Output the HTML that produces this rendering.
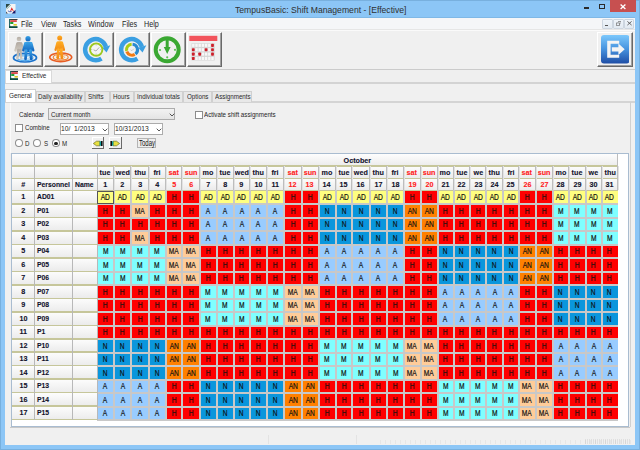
<!DOCTYPE html><html><head><meta charset="utf-8"><style>*{margin:0;padding:0}
html,body{width:640px;height:450px;overflow:hidden;background:#f0f0f0;font-family:"Liberation Sans", sans-serif}
div{position:absolute}
i{font-style:normal;display:inline-block;white-space:nowrap}
.tx{white-space:nowrap;transform-origin:0 50%}
svg{position:absolute}
.hd{background:linear-gradient(#fdfdfd,#ebebeb);text-align:center;font-weight:bold;font-size:8px;color:#10102a;-webkit-text-stroke:0.1px}
.hd i{transform:scaleX(.9)}
.hd.l{text-align:left}
.hd.l i{transform-origin:left center;transform:scaleX(.85);margin-left:2px}
.hd.rd{color:#ff2020}
.rw b{position:absolute;top:0;width:16.80px;height:100%;text-align:center;font-size:9px;font-weight:normal;color:#111;-webkit-text-stroke:0.2px #111}
.rw b i{transform:scaleX(.74)}
.rw b.AD{background:#FFFF80}.rw b.H{background:#FF0000}.rw b.MA{background:#FFCC99}.rw b.A{background:#99CCFF}.rw b.N{background:#0A96DC}.rw b.M{background:#80FFFF}.rw b.AN{background:#FF8000}
</style></head><body><div style="left:0.00px;top:0.00px;width:640.00px;height:450.00px;background:#8cc6f6;box-shadow:inset 0 0 0 1px #78b0de"></div><div style="left:5.00px;top:18.00px;width:630.00px;height:427.00px;background:#f0f0f0"></div><svg style="left:6px;top:4px" width="9.5" height="9.5" viewBox="0 0 10 10"><rect width="10" height="10" fill="#f4f4f4"/><path d="M0 0H4.5L0 4.5Z" fill="#2a4a48"/><path d="M0.5 5.5L5 1" stroke="#5a9a90" stroke-width="0.8"/><path d="M6 3.5L8.5 8H7.6L6.8 6.6H5.6L5 8H4.2Z" fill="#e02a2a"/><path d="M2 7.2Q4 8.8 6 8" stroke="#3850b0" stroke-width="0.9" fill="none"/><path d="M10 6V10H6Z" fill="#101c70"/><path d="M0 8V10H2Z" fill="#404850"/></svg><div class="tx" style="left:235.20px;top:4.64px;font-size:9.4px;line-height:9.4px;color:#303030;transform:scaleX(0.92);">TempusBasic: Shift Management - [Effective]</div><div style="left:583.80px;top:7.40px;width:4.80px;height:1.80px;background:#2a2a2a"></div><div style="left:598.80px;top:4.20px;width:6.40px;height:4.60px;border:1px solid #2a2a2a;border-top-width:1.6px;box-sizing:border-box"></div><div style="left:609.80px;top:0.40px;width:26.00px;height:11.80px;background:#c75050"></div><svg style="left:620px;top:4px" width="6" height="5.5" viewBox="0 0 6 5.5"><path d="M0.6 0.5L5.4 5M5.4 0.5L0.6 5" stroke="#fff" stroke-width="1.3"/></svg><div style="left:5.00px;top:17.00px;width:630.00px;height:1.00px;background:#7fb8e6"></div><div style="left:5.00px;top:18.00px;width:630.00px;height:10.50px;background:#f5f6f8"></div><div style="left:5.00px;top:28.50px;width:630.00px;height:1.50px;background:#e6e6e6"></div><div style="left:5.00px;top:30.00px;width:630.00px;height:1.00px;background:#fafafa"></div><svg style="left:9px;top:19px" width="8.5" height="9" viewBox="0 0 8.5 9"><rect width="8.5" height="9" fill="#f6f6f6"/><rect x="0" y="0" width="8.5" height="1" fill="#3a3a3a"/><rect x="0" y="0" width="1.3" height="9" fill="#2a6a68"/><rect x="1.3" y="1.3" width="6.5" height="1.5" fill="#d42020"/><rect x="1.3" y="3" width="3" height="2" fill="#20a030"/><rect x="4.3" y="5" width="3.5" height="1.6" fill="#d8c820"/><rect x="1.3" y="5" width="3" height="1.6" fill="#fff"/><rect x="0" y="7.2" width="8.5" height="1.8" fill="#0a4a40"/></svg><div class="tx" style="left:21.40px;top:19.68px;font-size:9px;line-height:9px;color:#1e1e1e;transform:scaleX(0.8);">File</div><div class="tx" style="left:40.60px;top:19.68px;font-size:9px;line-height:9px;color:#1e1e1e;transform:scaleX(0.8);">View</div><div class="tx" style="left:63.20px;top:19.68px;font-size:9px;line-height:9px;color:#1e1e1e;transform:scaleX(0.8);">Tasks</div><div class="tx" style="left:88.20px;top:19.68px;font-size:9px;line-height:9px;color:#1e1e1e;transform:scaleX(0.8);">Window</div><div class="tx" style="left:122.40px;top:19.68px;font-size:9px;line-height:9px;color:#1e1e1e;transform:scaleX(0.8);">Files</div><div class="tx" style="left:143.90px;top:19.68px;font-size:9px;line-height:9px;color:#1e1e1e;transform:scaleX(0.8);">Help</div><div style="left:602.30px;top:18.50px;width:10.40px;height:10.80px;background:linear-gradient(#eef4fa,#e2eaf2);border:1px solid #cdd6e0;border-radius:1px;box-sizing:border-box"></div><div style="left:613.20px;top:18.50px;width:10.40px;height:10.80px;background:linear-gradient(#eef4fa,#e2eaf2);border:1px solid #cdd6e0;border-radius:1px;box-sizing:border-box"></div><div style="left:624.10px;top:18.50px;width:10.40px;height:10.80px;background:linear-gradient(#eef4fa,#e2eaf2);border:1px solid #cdd6e0;border-radius:1px;box-sizing:border-box"></div><div style="left:604.80px;top:25.30px;width:3.60px;height:1.10px;background:#555"></div><svg style="left:615.8px;top:20.5px" width="5.5" height="5" viewBox="0 0 5.5 5"><path d="M2 0.4h3.1v2.7M0.4 1.9h3.1v2.7h-3.1z" fill="none" stroke="#666" stroke-width="0.7"/></svg><svg style="left:626.6px;top:21.3px" width="5" height="4.5" viewBox="0 0 5 4.5"><path d="M0.4 0.4L4.6 4.1M4.6 0.4L0.4 4.1" stroke="#555" stroke-width="0.9"/></svg><div style="left:5.00px;top:69.00px;width:630.00px;height:1.00px;background:#cbcbcb"></div><div style="left:7.70px;top:32.00px;width:34.90px;height:34.50px;background:#f0f0f0;border-left:1px solid #fff;border-top:1px solid #fff;border-right:1px solid #696969;border-bottom:1px solid #696969;box-sizing:border-box;box-shadow:inset -1px -1px 0 #a0a0a0"></div><div style="left:43.50px;top:32.00px;width:34.90px;height:34.50px;background:#f0f0f0;border-left:1px solid #fff;border-top:1px solid #fff;border-right:1px solid #696969;border-bottom:1px solid #696969;box-sizing:border-box;box-shadow:inset -1px -1px 0 #a0a0a0"></div><div style="left:79.30px;top:32.00px;width:34.90px;height:34.50px;background:#f0f0f0;border-left:1px solid #fff;border-top:1px solid #fff;border-right:1px solid #696969;border-bottom:1px solid #696969;box-sizing:border-box;box-shadow:inset -1px -1px 0 #a0a0a0"></div><div style="left:115.10px;top:32.00px;width:34.90px;height:34.50px;background:#f0f0f0;border-left:1px solid #fff;border-top:1px solid #fff;border-right:1px solid #696969;border-bottom:1px solid #696969;box-sizing:border-box;box-shadow:inset -1px -1px 0 #a0a0a0"></div><div style="left:150.90px;top:32.00px;width:34.90px;height:34.50px;background:#f0f0f0;border-left:1px solid #fff;border-top:1px solid #fff;border-right:1px solid #696969;border-bottom:1px solid #696969;box-sizing:border-box;box-shadow:inset -1px -1px 0 #a0a0a0"></div><div style="left:186.70px;top:32.00px;width:34.90px;height:34.50px;background:#f0f0f0;border-left:1px solid #fff;border-top:1px solid #fff;border-right:1px solid #696969;border-bottom:1px solid #696969;box-sizing:border-box;box-shadow:inset -1px -1px 0 #a0a0a0"></div><div style="left:597.40px;top:32.00px;width:35.20px;height:35.00px;background:#f0f0f0;border-left:1px solid #fff;border-top:1px solid #fff;border-right:1px solid #696969;border-bottom:1px solid #696969;box-sizing:border-box;box-shadow:inset -1px -1px 0 #a0a0a0"></div><div style="left:5.00px;top:70.00px;width:630.00px;height:14.00px;background:#efefef;border-bottom:2px solid #d3d3d3;box-sizing:border-box"></div><div style="left:5.00px;top:70.00px;width:46.50px;height:13.30px;background:#fff;border:1px solid #d9d9d9;border-bottom:none;box-sizing:border-box"></div><svg style="left:9.5px;top:71.2px" width="8.5" height="9" viewBox="0 0 8.5 9"><rect width="8.5" height="9" fill="#f6f6f6"/><rect x="0" y="0" width="8.5" height="1" fill="#3a3a3a"/><rect x="0" y="0" width="1.3" height="9" fill="#2a6a68"/><rect x="1.3" y="1.3" width="6.5" height="1.5" fill="#d42020"/><rect x="1.3" y="3" width="3" height="2" fill="#20a030"/><rect x="4.3" y="5" width="3.5" height="1.6" fill="#d8c820"/><rect x="1.3" y="5" width="3" height="1.6" fill="#fff"/><rect x="0" y="7.2" width="8.5" height="1.8" fill="#0a4a40"/></svg><div class="tx" style="left:22.30px;top:72.43px;font-size:8px;line-height:8px;color:#2a2a2a;transform:scaleX(0.8);">Effective</div><div style="left:5.00px;top:101.30px;width:630.00px;height:1.60px;background:#d4d4d4"></div><div style="left:629.50px;top:101.50px;width:1.00px;height:325.00px;background:#d0d0d0"></div><div style="left:35.60px;top:90.80px;width:49.10px;height:11.00px;background:#e8e8e8;border:1px solid #d0d0d0;border-bottom:none;box-sizing:border-box"></div><div class="tx" style="left:37.70px;top:93.37px;font-size:7.6px;line-height:7.6px;color:#2a2a2a;transform:scaleX(0.82);">Daily availability</div><div style="left:85.20px;top:90.80px;width:24.60px;height:11.00px;background:#e8e8e8;border:1px solid #d0d0d0;border-bottom:none;box-sizing:border-box"></div><div class="tx" style="left:88.30px;top:93.37px;font-size:7.6px;line-height:7.6px;color:#2a2a2a;transform:scaleX(0.82);">Shifts</div><div style="left:109.80px;top:90.80px;width:23.80px;height:11.00px;background:#e8e8e8;border:1px solid #d0d0d0;border-bottom:none;box-sizing:border-box"></div><div class="tx" style="left:112.70px;top:93.37px;font-size:7.6px;line-height:7.6px;color:#2a2a2a;transform:scaleX(0.82);">Hours</div><div style="left:133.60px;top:90.80px;width:49.20px;height:11.00px;background:#e8e8e8;border:1px solid #d0d0d0;border-bottom:none;box-sizing:border-box"></div><div class="tx" style="left:137.10px;top:93.37px;font-size:7.6px;line-height:7.6px;color:#2a2a2a;transform:scaleX(0.82);">Individual totals</div><div style="left:182.80px;top:90.80px;width:29.40px;height:11.00px;background:#e8e8e8;border:1px solid #d0d0d0;border-bottom:none;box-sizing:border-box"></div><div class="tx" style="left:187.10px;top:93.37px;font-size:7.6px;line-height:7.6px;color:#2a2a2a;transform:scaleX(0.82);">Options</div><div style="left:212.20px;top:90.80px;width:40.20px;height:11.00px;background:#e8e8e8;border:1px solid #d0d0d0;border-bottom:none;box-sizing:border-box"></div><div class="tx" style="left:215.20px;top:93.37px;font-size:7.6px;line-height:7.6px;color:#2a2a2a;transform:scaleX(0.82);">Assignments</div><div style="left:5.00px;top:89.40px;width:30.60px;height:13.10px;background:#fff;border:1px solid #d0d0d0;border-bottom:none;box-sizing:border-box"></div><div class="tx" style="left:8.60px;top:91.77px;font-size:7.6px;line-height:7.6px;color:#2a2a2a;transform:scaleX(0.84);">General</div><div style="left:10.00px;top:103.00px;width:1.00px;height:50.00px;background:#fafafa"></div><div class="tx" style="left:19.20px;top:110.63px;font-size:8px;line-height:8px;color:#1e1e1e;transform:scaleX(0.77);">Calendar</div><div style="left:48.40px;top:108.00px;width:126.60px;height:11.70px;background:linear-gradient(#f2f2f2,#e4e4e4);border:1px solid #acacac;box-sizing:border-box"></div><div class="tx" style="left:50.80px;top:110.63px;font-size:8px;line-height:8px;color:#1e1e1e;transform:scaleX(0.77);">Current month</div><svg style="position:absolute;left:168.5px;top:112.5px" width="6" height="4"><path d="M0.7 0.7L3 3L5.3 0.7" fill="none" stroke="#444" stroke-width="0.9"/></svg><div style="left:195.00px;top:111.20px;width:8.00px;height:7.60px;background:#fff;border:1px solid #8c8c8c;box-sizing:border-box"></div><div class="tx" style="left:204.20px;top:111.13px;font-size:8px;line-height:8px;color:#1e1e1e;transform:scaleX(0.775);">Activate shift assignments</div><div style="left:15.20px;top:124.20px;width:7.60px;height:7.80px;background:#fff;border:1px solid #8c8c8c;box-sizing:border-box"></div><div class="tx" style="left:24.60px;top:124.23px;font-size:8px;line-height:8px;color:#1e1e1e;transform:scaleX(0.77);">Combine</div><div style="left:59.80px;top:123.40px;width:49.50px;height:11.80px;background:#fff;border:1px solid #acacac;box-sizing:border-box"></div><div class="tx" style="left:61.00px;top:125.23px;font-size:8px;line-height:8px;color:#1e1e1e;transform:scaleX(0.84);">10/&nbsp; 1/2013</div><svg style="position:absolute;left:102.3px;top:128px" width="6" height="4"><path d="M0.7 0.7L3 3L5.3 0.7" fill="none" stroke="#444" stroke-width="0.9"/></svg><div style="left:114.00px;top:123.40px;width:49.20px;height:11.80px;background:#fff;border:1px solid #acacac;box-sizing:border-box"></div><div class="tx" style="left:115.20px;top:125.23px;font-size:8px;line-height:8px;color:#1e1e1e;transform:scaleX(0.84);">10/31/2013</div><svg style="position:absolute;left:156.2px;top:128px" width="6" height="4"><path d="M0.7 0.7L3 3L5.3 0.7" fill="none" stroke="#444" stroke-width="0.9"/></svg><div style="left:15.00px;top:139.20px;width:7.80px;height:8.20px;background:#fff;border:1px solid #8c8c8c;border-radius:50%;box-sizing:border-box"></div><div class="tx" style="left:25.00px;top:139.63px;font-size:8px;line-height:8px;color:#1e1e1e;transform:scaleX(0.77);">D</div><div style="left:33.20px;top:139.20px;width:7.80px;height:8.20px;background:#fff;border:1px solid #8c8c8c;border-radius:50%;box-sizing:border-box"></div><div class="tx" style="left:44.00px;top:139.63px;font-size:8px;line-height:8px;color:#1e1e1e;transform:scaleX(0.77);">S</div><div style="left:52.20px;top:139.20px;width:7.80px;height:8.20px;background:#fff;border:1px solid #8c8c8c;border-radius:50%;box-sizing:border-box"></div><div style="left:54.40px;top:141.50px;width:3.40px;height:3.60px;background:#222;border-radius:50%"></div><div class="tx" style="left:62.00px;top:139.63px;font-size:8px;line-height:8px;color:#1e1e1e;transform:scaleX(0.77);">M</div><div style="left:91.70px;top:137.40px;width:12.20px;height:11.40px;border-right:1px solid #6a6a6a;border-bottom:1px solid #6a6a6a;box-sizing:border-box;box-shadow:inset 1px 1px 0 #fff"></div><div style="left:109.00px;top:137.40px;width:12.50px;height:11.40px;border-right:1px solid #6a6a6a;border-bottom:1px solid #6a6a6a;box-sizing:border-box;box-shadow:inset 1px 1px 0 #fff"></div><svg style="left:92.5px;top:139.8px" width="10" height="7" viewBox="0 0 10 7"><path d="M0.4 3.5L3.5 1.2H7V5.8H3.5Z" fill="#e8e040" stroke="#5a5a10" stroke-width="0.6"/><rect x="6.6" y="1.3" width="1.4" height="4.4" fill="#10a0a0"/><rect x="8" y="1" width="1.6" height="5" fill="#101010"/></svg><svg style="left:110.3px;top:139.8px" width="10" height="7" viewBox="0 0 10 7"><path d="M9.6 3.5L6.5 1.2H3V5.8H6.5Z" fill="#e8e040" stroke="#5a5a10" stroke-width="0.6"/><rect x="2" y="1.3" width="1.4" height="4.4" fill="#10a0a0"/><rect x="0.4" y="1" width="1.6" height="5" fill="#101010"/></svg><div style="left:137.40px;top:137.60px;width:18.30px;height:10.80px;background:#eeeeee;border:1px solid #b4b4b4;box-sizing:border-box"></div><div class="tx" style="left:138.60px;top:139.49px;font-size:8.4px;line-height:8.4px;color:#111;transform:scaleX(0.72);">Today</div><div style="left:268.30px;top:435.00px;width:1.00px;height:9.00px;background:#e3e3e3"></div><div style="left:380.00px;top:440.00px;width:255.00px;height:4.00px;background:repeating-linear-gradient(90deg,rgba(0,0,0,0.045) 0 1px,transparent 1px 5px);"></div><div style="left:585.00px;top:439.00px;width:45.00px;height:5.00px;background:repeating-linear-gradient(90deg,rgba(0,0,0,0.07) 0 1px,transparent 1px 2px);"></div><div style="left:355.80px;top:435.00px;width:1.00px;height:9.00px;background:#e3e3e3"></div><svg style="left:8.2px;top:33px" width="34" height="33" viewBox="0 0 34 33"><defs><linearGradient id="gb" x1="0" y1="0" x2="0" y2="1"><stop offset="0" stop-color="#3aa2e6"/><stop offset="1" stop-color="#1266c0"/></linearGradient><linearGradient id="gg" x1="0" y1="0" x2="0" y2="1"><stop offset="0" stop-color="#b4aca4"/><stop offset="1" stop-color="#cfc9c0"/></linearGradient><linearGradient id="go" x1="0" y1="0" x2="0" y2="1"><stop offset="0" stop-color="#ffac22"/><stop offset="1" stop-color="#f28a14"/></linearGradient></defs><ellipse cx="17" cy="24.7" rx="11.5" ry="4.3" fill="none" stroke="#1a72cc" stroke-width="1.7"/><ellipse cx="17" cy="24.7" rx="8" ry="2.8" fill="none" stroke="#58aeee" stroke-width="1.1"/><ellipse cx="17" cy="24.7" rx="4.5" ry="1.5" fill="none" stroke="#9ad0f6" stroke-width="0.9"/><circle cx="11" cy="6" r="2.3" fill="url(#gg)"/><path d="M10.4 9H12.2Q14 9 14 11V18.5H8.6V11Q8.6 9 10.4 9Z" fill="url(#gg)"/><path d="M9.299999999999999 10.3L7.3 17.6M13.3 10.3L15.3 17.6" stroke="url(#gg)" stroke-width="2.1" stroke-linecap="round"/><path d="M10.2 17.0L9.5 25.3M12.4 17.0L13.2 25.3" stroke="url(#gg)" stroke-width="2.3" stroke-linecap="round"/><circle cx="20" cy="5.7" r="2.6" fill="url(#gb)"/><path d="M18.400000000000002 8.8H22.2Q24 8.8 24 10.8V19H16.6V10.8Q16.6 8.8 18.400000000000002 8.8Z" fill="url(#gb)"/><path d="M17.3 10.100000000000001L15.3 17.4M23.3 10.100000000000001L25.3 17.4" stroke="url(#gb)" stroke-width="2.3" stroke-linecap="round"/><path d="M18.200000000000003 17.5L17.5 25.8M22.4 17.5L23.2 25.8" stroke="url(#gb)" stroke-width="2.7" stroke-linecap="round"/></svg><svg style="left:44px;top:33px" width="34" height="33" viewBox="0 0 34 33"><ellipse cx="16.7" cy="24.3" rx="11" ry="4.3" fill="none" stroke="#e85c22" stroke-width="1.6"/><ellipse cx="16.7" cy="24.3" rx="7.5" ry="2.8" fill="none" stroke="#f08030" stroke-width="1.1"/><ellipse cx="16.7" cy="24.3" rx="4" ry="1.4" fill="none" stroke="#f8a850" stroke-width="0.9"/><circle cx="15.7" cy="5" r="2.5" fill="url(#go)"/><path d="M14.600000000000001 8.3H16.9Q18.7 8.3 18.7 10.3V18H12.8V10.3Q12.8 8.3 14.600000000000001 8.3Z" fill="url(#go)"/><path d="M13.5 9.600000000000001L11.5 16.9M18.0 9.600000000000001L20.0 16.9" stroke="url(#go)" stroke-width="2.2" stroke-linecap="round"/><path d="M14.4 16.5L13.700000000000001 24.8M17.099999999999998 16.5L17.9 24.8" stroke="url(#go)" stroke-width="2.6" stroke-linecap="round"/></svg><svg style="left:79.8px;top:33px" width="34" height="33" viewBox="0 0 34 33"><path d="M21.47 25.59A10.6 10.6 0 1 1 25.89 13.78" fill="none" stroke="#3a9fe2" stroke-width="4.4"/><path d="M22.20 14.71L30.33 12.23L26.57 19.41Z" fill="#3a9fe2"/><circle cx="16.2" cy="16.6" r="6.2" fill="#f4f4f4" stroke="#9cc820" stroke-width="1.9"/><path d="M16.2 11.3v1.2M16.2 20.5v1.2M11 16.5h1.2M20.2 16.5h1.2" stroke="#b8b8b8" stroke-width="0.8"/><path d="M13.6 16.8l2.4 1.2l3.2-3.6" fill="none" stroke="#b0b0b0" stroke-width="1"/></svg><svg style="left:115.6px;top:33px" width="34" height="33" viewBox="0 0 34 33"><path d="M21.47 25.59A10.6 10.6 0 1 1 25.89 13.78" fill="none" stroke="#3a9fe2" stroke-width="4.4"/><path d="M22.20 14.71L30.33 12.23L26.57 19.41Z" fill="#3a9fe2"/><circle cx="16" cy="16.7" r="4" fill="#f2f2f2"/><path d="M10.62 17.84A5.5 5.5 0 0 1 15.62 11.21" fill="none" stroke="#a8cc14" stroke-width="3.1"/><path d="M16.57 11.23A5.5 5.5 0 0 1 19.39 21.03" fill="none" stroke="#2a8ad0" stroke-width="3.1"/><path d="M18.75 21.46A5.5 5.5 0 0 1 10.83 18.58" fill="none" stroke="#f27a12" stroke-width="3.1"/><path d="M14.6 16.8l1.3 0.9l2-2" fill="none" stroke="#c4c4c4" stroke-width="0.9"/></svg><svg style="left:151.4px;top:33px" width="34" height="33" viewBox="0 0 34 33"><circle cx="16.2" cy="16.7" r="11.5" fill="none" stroke="#3aa832" stroke-width="4"/><path d="M14.7 4v10h-1.9l3.4 7l3.4-7h-1.9v-10z" fill="#3aa832"/><circle cx="9" cy="17" r="1.1" fill="#58c050"/><circle cx="24" cy="16.8" r="1.1" fill="#58c050"/><circle cx="16.2" cy="24.3" r="1.1" fill="#58c050"/></svg><svg style="left:187.2px;top:33px" width="34" height="33" viewBox="0 0 34 33"><rect x="2.3" y="2.8" width="28" height="5.2" fill="#f2545c"/><rect x="4.5" y="10.2" width="23.2" height="17.3" fill="#d6d6d6"/><g fill="#f8f8f8"><rect x="5.1" y="10.80" width="2.4" height="3.1"/><rect x="8.3" y="10.80" width="2.4" height="3.1"/><rect x="11.5" y="10.80" width="2.4" height="3.1"/><rect x="14.7" y="10.80" width="2.4" height="3.1"/><rect x="17.9" y="10.80" width="2.4" height="3.1"/><rect x="21.1" y="10.80" width="2.4" height="3.1"/><rect x="24.3" y="10.80" width="2.4" height="3.1"/><rect x="5.1" y="15.17" width="2.4" height="3.1"/><rect x="8.3" y="15.17" width="2.4" height="3.1"/><rect x="11.5" y="15.17" width="2.4" height="3.1"/><rect x="14.7" y="15.17" width="2.4" height="3.1"/><rect x="17.9" y="15.17" width="2.4" height="3.1"/><rect x="21.1" y="15.17" width="2.4" height="3.1"/><rect x="24.3" y="15.17" width="2.4" height="3.1"/><rect x="5.1" y="19.54" width="2.4" height="3.1"/><rect x="8.3" y="19.54" width="2.4" height="3.1"/><rect x="11.5" y="19.54" width="2.4" height="3.1"/><rect x="14.7" y="19.54" width="2.4" height="3.1"/><rect x="17.9" y="19.54" width="2.4" height="3.1"/><rect x="21.1" y="19.54" width="2.4" height="3.1"/><rect x="24.3" y="19.54" width="2.4" height="3.1"/><rect x="5.1" y="23.91" width="2.4" height="3.1"/><rect x="8.3" y="23.91" width="2.4" height="3.1"/><rect x="11.5" y="23.91" width="2.4" height="3.1"/><rect x="14.7" y="23.91" width="2.4" height="3.1"/><rect x="17.9" y="23.91" width="2.4" height="3.1"/><rect x="21.1" y="23.91" width="2.4" height="3.1"/><rect x="24.3" y="23.91" width="2.4" height="3.1"/></g><g fill="#cc1f2a"><rect x="24.1" y="10.80" width="2.8" height="3.1" rx="0.7"/><rect x="4.9" y="15.17" width="2.8" height="3.1" rx="0.7"/><rect x="17.7" y="15.17" width="2.8" height="3.1" rx="0.7"/><rect x="24.1" y="15.17" width="2.8" height="3.1" rx="0.7"/><rect x="4.9" y="19.54" width="2.8" height="3.1" rx="0.7"/><rect x="11.3" y="19.54" width="2.8" height="3.1" rx="0.7"/><rect x="24.1" y="19.54" width="2.8" height="3.1" rx="0.7"/><rect x="4.9" y="23.91" width="2.8" height="3.1" rx="0.7"/></g></svg><svg style="left:600.8px;top:35.3px" width="28.5" height="28.5" viewBox="0 0 28.5 28.5"><defs><linearGradient id="ge" x1="0" y1="0" x2="0" y2="1"><stop offset="0" stop-color="#7cc8fc"/><stop offset="0.5" stop-color="#4692de"/><stop offset="1" stop-color="#1f4ea6"/></linearGradient></defs><rect x="0" y="0" width="28.5" height="28.5" rx="3" fill="url(#ge)"/><path d="M6.2 5.8h12v3h-8.6v10.9h8.6v3h-12z" fill="#f4f4f4"/><path d="M10.8 12.2h6.6v-3.6l6.3 5.7l-6.3 5.7v-3.6h-6.6z" fill="#f4f4f4"/></svg><div style="left:11.0px;top:153.0px;width:618.0px;height:274.0px;background:#fff;border:1px solid #a9bcd0;box-sizing:border-box;"></div><div style="left:10.0px;top:427.0px;width:620.0px;height:1.0px;background:#c8c8c8;"></div><div class="hd" style="left:12.0px;top:153.5px;width:22.9px;height:12.4px;line-height:13.4px;"></div><div class="hd l" style="left:34.9px;top:153.5px;width:37.6px;height:12.4px;line-height:13.4px;"></div><div class="hd l" style="left:72.5px;top:153.5px;width:24.5px;height:12.4px;line-height:13.4px;"></div><div class="hd" style="left:12.0px;top:165.9px;width:22.9px;height:12.4px;line-height:13.4px;"></div><div class="hd l" style="left:34.9px;top:165.9px;width:37.6px;height:12.4px;line-height:13.4px;"></div><div class="hd l" style="left:72.5px;top:165.9px;width:24.5px;height:12.4px;line-height:13.4px;"></div><div class="hd" style="left:12.0px;top:178.3px;width:22.9px;height:12.1px;line-height:13.1px;"><i>#</i></div><div class="hd l" style="left:34.9px;top:178.3px;width:37.6px;height:12.1px;line-height:13.1px;"><i>Personnel</i></div><div class="hd l" style="left:72.5px;top:178.3px;width:24.5px;height:12.1px;line-height:13.1px;"><i>Name</i></div><div class="hd" style="left:97.0px;top:153.5px;width:520.8px;height:12.4px;line-height:13.4px;"><i>October</i></div><div class="hd" style="left:97.0px;top:165.9px;width:16.8px;height:12.4px;line-height:13.4px;"><i>tue</i></div><div class="hd" style="left:97.0px;top:178.3px;width:16.8px;height:12.1px;line-height:13.1px;"><i>1</i></div><div class="hd" style="left:113.8px;top:165.9px;width:17.5px;height:12.4px;line-height:13.4px;"><i>wed</i></div><div class="hd" style="left:113.8px;top:178.3px;width:17.5px;height:12.1px;line-height:13.1px;"><i>2</i></div><div class="hd" style="left:131.2px;top:165.9px;width:17.2px;height:12.4px;line-height:13.4px;"><i>thu</i></div><div class="hd" style="left:131.2px;top:178.3px;width:17.2px;height:12.1px;line-height:13.1px;"><i>3</i></div><div class="hd" style="left:148.5px;top:165.9px;width:17.1px;height:12.4px;line-height:13.4px;"><i>fri</i></div><div class="hd" style="left:148.5px;top:178.3px;width:17.1px;height:12.1px;line-height:13.1px;"><i>4</i></div><div class="hd rd" style="left:165.6px;top:165.9px;width:16.7px;height:12.4px;line-height:13.4px;"><i>sat</i></div><div class="hd rd" style="left:165.6px;top:178.3px;width:16.7px;height:12.1px;line-height:13.1px;"><i>5</i></div><div class="hd rd" style="left:182.2px;top:165.9px;width:17.2px;height:12.4px;line-height:13.4px;"><i>sun</i></div><div class="hd rd" style="left:182.2px;top:178.3px;width:17.2px;height:12.1px;line-height:13.1px;"><i>6</i></div><div class="hd" style="left:199.4px;top:165.9px;width:17.2px;height:12.4px;line-height:13.4px;"><i>mo</i></div><div class="hd" style="left:199.4px;top:178.3px;width:17.2px;height:12.1px;line-height:13.1px;"><i>7</i></div><div class="hd" style="left:216.6px;top:165.9px;width:16.8px;height:12.4px;line-height:13.4px;"><i>tue</i></div><div class="hd" style="left:216.6px;top:178.3px;width:16.8px;height:12.1px;line-height:13.1px;"><i>8</i></div><div class="hd" style="left:233.4px;top:165.9px;width:16.6px;height:12.4px;line-height:13.4px;"><i>wed</i></div><div class="hd" style="left:233.4px;top:178.3px;width:16.6px;height:12.1px;line-height:13.1px;"><i>9</i></div><div class="hd" style="left:250.0px;top:165.9px;width:16.9px;height:12.4px;line-height:13.4px;"><i>thu</i></div><div class="hd" style="left:250.0px;top:178.3px;width:16.9px;height:12.1px;line-height:13.1px;"><i>10</i></div><div class="hd" style="left:266.9px;top:165.9px;width:17.2px;height:12.4px;line-height:13.4px;"><i>fri</i></div><div class="hd" style="left:266.9px;top:178.3px;width:17.2px;height:12.1px;line-height:13.1px;"><i>11</i></div><div class="hd rd" style="left:284.1px;top:165.9px;width:17.4px;height:12.4px;line-height:13.4px;"><i>sat</i></div><div class="hd rd" style="left:284.1px;top:178.3px;width:17.4px;height:12.1px;line-height:13.1px;"><i>12</i></div><div class="hd rd" style="left:301.5px;top:165.9px;width:16.9px;height:12.4px;line-height:13.4px;"><i>sun</i></div><div class="hd rd" style="left:301.5px;top:178.3px;width:16.9px;height:12.1px;line-height:13.1px;"><i>13</i></div><div class="hd" style="left:318.4px;top:165.9px;width:17.0px;height:12.4px;line-height:13.4px;"><i>mo</i></div><div class="hd" style="left:318.4px;top:178.3px;width:17.0px;height:12.1px;line-height:13.1px;"><i>14</i></div><div class="hd" style="left:335.4px;top:165.9px;width:16.8px;height:12.4px;line-height:13.4px;"><i>tue</i></div><div class="hd" style="left:335.4px;top:178.3px;width:16.8px;height:12.1px;line-height:13.1px;"><i>15</i></div><div class="hd" style="left:352.2px;top:165.9px;width:17.2px;height:12.4px;line-height:13.4px;"><i>wed</i></div><div class="hd" style="left:352.2px;top:178.3px;width:17.2px;height:12.1px;line-height:13.1px;"><i>16</i></div><div class="hd" style="left:369.4px;top:165.9px;width:17.5px;height:12.4px;line-height:13.4px;"><i>thu</i></div><div class="hd" style="left:369.4px;top:178.3px;width:17.5px;height:12.1px;line-height:13.1px;"><i>17</i></div><div class="hd" style="left:386.9px;top:165.9px;width:16.9px;height:12.4px;line-height:13.4px;"><i>fri</i></div><div class="hd" style="left:386.9px;top:178.3px;width:16.9px;height:12.1px;line-height:13.1px;"><i>18</i></div><div class="hd rd" style="left:403.8px;top:165.9px;width:16.9px;height:12.4px;line-height:13.4px;"><i>sat</i></div><div class="hd rd" style="left:403.8px;top:178.3px;width:16.9px;height:12.1px;line-height:13.1px;"><i>19</i></div><div class="hd rd" style="left:420.6px;top:165.9px;width:16.9px;height:12.4px;line-height:13.4px;"><i>sun</i></div><div class="hd rd" style="left:420.6px;top:178.3px;width:16.9px;height:12.1px;line-height:13.1px;"><i>20</i></div><div class="hd" style="left:437.5px;top:165.9px;width:15.9px;height:12.4px;line-height:13.4px;"><i>mo</i></div><div class="hd" style="left:437.5px;top:178.3px;width:15.9px;height:12.1px;line-height:13.1px;"><i>21</i></div><div class="hd" style="left:453.4px;top:165.9px;width:16.4px;height:12.4px;line-height:13.4px;"><i>tue</i></div><div class="hd" style="left:453.4px;top:178.3px;width:16.4px;height:12.1px;line-height:13.1px;"><i>22</i></div><div class="hd" style="left:469.8px;top:165.9px;width:16.5px;height:12.4px;line-height:13.4px;"><i>we</i></div><div class="hd" style="left:469.8px;top:178.3px;width:16.5px;height:12.1px;line-height:13.1px;"><i>23</i></div><div class="hd" style="left:486.2px;top:165.9px;width:16.9px;height:12.4px;line-height:13.4px;"><i>thu</i></div><div class="hd" style="left:486.2px;top:178.3px;width:16.9px;height:12.1px;line-height:13.1px;"><i>24</i></div><div class="hd" style="left:503.1px;top:165.9px;width:15.6px;height:12.4px;line-height:13.4px;"><i>fri</i></div><div class="hd" style="left:503.1px;top:178.3px;width:15.6px;height:12.1px;line-height:13.1px;"><i>25</i></div><div class="hd rd" style="left:518.8px;top:165.9px;width:16.9px;height:12.4px;line-height:13.4px;"><i>sat</i></div><div class="hd rd" style="left:518.8px;top:178.3px;width:16.9px;height:12.1px;line-height:13.1px;"><i>26</i></div><div class="hd rd" style="left:535.6px;top:165.9px;width:16.9px;height:12.4px;line-height:13.4px;"><i>sun</i></div><div class="hd rd" style="left:535.6px;top:178.3px;width:16.9px;height:12.1px;line-height:13.1px;"><i>27</i></div><div class="hd" style="left:552.5px;top:165.9px;width:16.1px;height:12.4px;line-height:13.4px;"><i>mo</i></div><div class="hd" style="left:552.5px;top:178.3px;width:16.1px;height:12.1px;line-height:13.1px;"><i>28</i></div><div class="hd" style="left:568.6px;top:165.9px;width:16.9px;height:12.4px;line-height:13.4px;"><i>tue</i></div><div class="hd" style="left:568.6px;top:178.3px;width:16.9px;height:12.1px;line-height:13.1px;"><i>29</i></div><div class="hd" style="left:585.5px;top:165.9px;width:16.2px;height:12.4px;line-height:13.4px;"><i>we</i></div><div class="hd" style="left:585.5px;top:178.3px;width:16.2px;height:12.1px;line-height:13.1px;"><i>30</i></div><div class="hd" style="left:601.7px;top:165.9px;width:16.1px;height:12.4px;line-height:13.4px;"><i>thu</i></div><div class="hd" style="left:601.7px;top:178.3px;width:16.1px;height:12.1px;line-height:13.1px;"><i>31</i></div><div class="hd" style="left:12.0px;top:190.4px;width:22.9px;height:13.5px;line-height:14.5px;"><i>1</i></div><div class="hd l" style="left:34.9px;top:190.4px;width:37.6px;height:13.5px;line-height:14.5px;"><i>AD01</i></div><div class="hd" style="left:72.5px;top:190.4px;width:24.5px;height:13.5px;"></div><div class="hd" style="left:12.0px;top:203.9px;width:22.9px;height:13.5px;line-height:14.5px;"><i>2</i></div><div class="hd l" style="left:34.9px;top:203.9px;width:37.6px;height:13.5px;line-height:14.5px;"><i>P01</i></div><div class="hd" style="left:72.5px;top:203.9px;width:24.5px;height:13.5px;"></div><div class="hd" style="left:12.0px;top:217.4px;width:22.9px;height:13.5px;line-height:14.5px;"><i>3</i></div><div class="hd l" style="left:34.9px;top:217.4px;width:37.6px;height:13.5px;line-height:14.5px;"><i>P02</i></div><div class="hd" style="left:72.5px;top:217.4px;width:24.5px;height:13.5px;"></div><div class="hd" style="left:12.0px;top:230.8px;width:22.9px;height:13.5px;line-height:14.5px;"><i>4</i></div><div class="hd l" style="left:34.9px;top:230.8px;width:37.6px;height:13.5px;line-height:14.5px;"><i>P03</i></div><div class="hd" style="left:72.5px;top:230.8px;width:24.5px;height:13.5px;"></div><div class="hd" style="left:12.0px;top:244.3px;width:22.9px;height:13.5px;line-height:14.5px;"><i>5</i></div><div class="hd l" style="left:34.9px;top:244.3px;width:37.6px;height:13.5px;line-height:14.5px;"><i>P04</i></div><div class="hd" style="left:72.5px;top:244.3px;width:24.5px;height:13.5px;"></div><div class="hd" style="left:12.0px;top:257.8px;width:22.9px;height:13.5px;line-height:14.5px;"><i>6</i></div><div class="hd l" style="left:34.9px;top:257.8px;width:37.6px;height:13.5px;line-height:14.5px;"><i>P05</i></div><div class="hd" style="left:72.5px;top:257.8px;width:24.5px;height:13.5px;"></div><div class="hd" style="left:12.0px;top:271.3px;width:22.9px;height:13.5px;line-height:14.5px;"><i>7</i></div><div class="hd l" style="left:34.9px;top:271.3px;width:37.6px;height:13.5px;line-height:14.5px;"><i>P06</i></div><div class="hd" style="left:72.5px;top:271.3px;width:24.5px;height:13.5px;"></div><div class="hd" style="left:12.0px;top:284.8px;width:22.9px;height:13.5px;line-height:14.5px;"><i>8</i></div><div class="hd l" style="left:34.9px;top:284.8px;width:37.6px;height:13.5px;line-height:14.5px;"><i>P07</i></div><div class="hd" style="left:72.5px;top:284.8px;width:24.5px;height:13.5px;"></div><div class="hd" style="left:12.0px;top:298.3px;width:22.9px;height:13.5px;line-height:14.5px;"><i>9</i></div><div class="hd l" style="left:34.9px;top:298.3px;width:37.6px;height:13.5px;line-height:14.5px;"><i>P08</i></div><div class="hd" style="left:72.5px;top:298.3px;width:24.5px;height:13.5px;"></div><div class="hd" style="left:12.0px;top:311.7px;width:22.9px;height:13.5px;line-height:14.5px;"><i>10</i></div><div class="hd l" style="left:34.9px;top:311.7px;width:37.6px;height:13.5px;line-height:14.5px;"><i>P09</i></div><div class="hd" style="left:72.5px;top:311.7px;width:24.5px;height:13.5px;"></div><div class="hd" style="left:12.0px;top:325.2px;width:22.9px;height:13.5px;line-height:14.5px;"><i>11</i></div><div class="hd l" style="left:34.9px;top:325.2px;width:37.6px;height:13.5px;line-height:14.5px;"><i>P1</i></div><div class="hd" style="left:72.5px;top:325.2px;width:24.5px;height:13.5px;"></div><div class="hd" style="left:12.0px;top:338.7px;width:22.9px;height:13.5px;line-height:14.5px;"><i>12</i></div><div class="hd l" style="left:34.9px;top:338.7px;width:37.6px;height:13.5px;line-height:14.5px;"><i>P10</i></div><div class="hd" style="left:72.5px;top:338.7px;width:24.5px;height:13.5px;"></div><div class="hd" style="left:12.0px;top:352.2px;width:22.9px;height:13.5px;line-height:14.5px;"><i>13</i></div><div class="hd l" style="left:34.9px;top:352.2px;width:37.6px;height:13.5px;line-height:14.5px;"><i>P11</i></div><div class="hd" style="left:72.5px;top:352.2px;width:24.5px;height:13.5px;"></div><div class="hd" style="left:12.0px;top:365.7px;width:22.9px;height:13.5px;line-height:14.5px;"><i>14</i></div><div class="hd l" style="left:34.9px;top:365.7px;width:37.6px;height:13.5px;line-height:14.5px;"><i>P12</i></div><div class="hd" style="left:72.5px;top:365.7px;width:24.5px;height:13.5px;"></div><div class="hd" style="left:12.0px;top:379.2px;width:22.9px;height:13.5px;line-height:14.5px;"><i>15</i></div><div class="hd l" style="left:34.9px;top:379.2px;width:37.6px;height:13.5px;line-height:14.5px;"><i>P13</i></div><div class="hd" style="left:72.5px;top:379.2px;width:24.5px;height:13.5px;"></div><div class="hd" style="left:12.0px;top:392.6px;width:22.9px;height:13.5px;line-height:14.5px;"><i>16</i></div><div class="hd l" style="left:34.9px;top:392.6px;width:37.6px;height:13.5px;line-height:14.5px;"><i>P14</i></div><div class="hd" style="left:72.5px;top:392.6px;width:24.5px;height:13.5px;"></div><div class="hd" style="left:12.0px;top:406.1px;width:22.9px;height:13.5px;line-height:14.5px;"><i>17</i></div><div class="hd l" style="left:34.9px;top:406.1px;width:37.6px;height:13.5px;line-height:14.5px;"><i>P15</i></div><div class="hd" style="left:72.5px;top:406.1px;width:24.5px;height:13.5px;"></div><div class="rw" style="left:97.0px;top:190.4px;width:520.8px;height:13.5px;line-height:14.5px;"><b class="AD" style="left:0.0px;width:16.8px"><i>AD</i></b><b class="AD" style="left:16.8px;width:17.5px"><i>AD</i></b><b class="AD" style="left:34.2px;width:17.2px"><i>AD</i></b><b class="AD" style="left:51.5px;width:17.1px"><i>AD</i></b><b class="H" style="left:68.6px;width:16.7px"><i>H</i></b><b class="H" style="left:85.2px;width:17.2px"><i>H</i></b><b class="AD" style="left:102.4px;width:17.2px"><i>AD</i></b><b class="AD" style="left:119.6px;width:16.8px"><i>AD</i></b><b class="AD" style="left:136.4px;width:16.6px"><i>AD</i></b><b class="AD" style="left:153.0px;width:16.9px"><i>AD</i></b><b class="AD" style="left:169.9px;width:17.2px"><i>AD</i></b><b class="H" style="left:187.1px;width:17.4px"><i>H</i></b><b class="H" style="left:204.5px;width:16.9px"><i>H</i></b><b class="AD" style="left:221.4px;width:17.0px"><i>AD</i></b><b class="AD" style="left:238.4px;width:16.8px"><i>AD</i></b><b class="AD" style="left:255.2px;width:17.2px"><i>AD</i></b><b class="AD" style="left:272.4px;width:17.5px"><i>AD</i></b><b class="AD" style="left:289.9px;width:16.9px"><i>AD</i></b><b class="H" style="left:306.8px;width:16.9px"><i>H</i></b><b class="H" style="left:323.6px;width:16.9px"><i>H</i></b><b class="AD" style="left:340.5px;width:15.9px"><i>AD</i></b><b class="AD" style="left:356.4px;width:16.4px"><i>AD</i></b><b class="AD" style="left:372.8px;width:16.5px"><i>AD</i></b><b class="AD" style="left:389.2px;width:16.9px"><i>AD</i></b><b class="AD" style="left:406.1px;width:15.6px"><i>AD</i></b><b class="H" style="left:421.8px;width:16.9px"><i>H</i></b><b class="H" style="left:438.6px;width:16.9px"><i>H</i></b><b class="AD" style="left:455.5px;width:16.1px"><i>AD</i></b><b class="AD" style="left:471.6px;width:16.9px"><i>AD</i></b><b class="AD" style="left:488.5px;width:16.2px"><i>AD</i></b><b class="AD" style="left:504.7px;width:16.1px"><i>AD</i></b></div><div class="rw" style="left:97.0px;top:203.9px;width:520.8px;height:13.5px;line-height:14.5px;"><b class="H" style="left:0.0px;width:16.8px"><i>H</i></b><b class="H" style="left:16.8px;width:17.5px"><i>H</i></b><b class="MA" style="left:34.2px;width:17.2px"><i>MA</i></b><b class="H" style="left:51.5px;width:17.1px"><i>H</i></b><b class="H" style="left:68.6px;width:16.7px"><i>H</i></b><b class="H" style="left:85.2px;width:17.2px"><i>H</i></b><b class="A" style="left:102.4px;width:17.2px"><i>A</i></b><b class="A" style="left:119.6px;width:16.8px"><i>A</i></b><b class="A" style="left:136.4px;width:16.6px"><i>A</i></b><b class="A" style="left:153.0px;width:16.9px"><i>A</i></b><b class="A" style="left:169.9px;width:17.2px"><i>A</i></b><b class="H" style="left:187.1px;width:17.4px"><i>H</i></b><b class="H" style="left:204.5px;width:16.9px"><i>H</i></b><b class="N" style="left:221.4px;width:17.0px"><i>N</i></b><b class="N" style="left:238.4px;width:16.8px"><i>N</i></b><b class="N" style="left:255.2px;width:17.2px"><i>N</i></b><b class="N" style="left:272.4px;width:17.5px"><i>N</i></b><b class="N" style="left:289.9px;width:16.9px"><i>N</i></b><b class="AN" style="left:306.8px;width:16.9px"><i>AN</i></b><b class="AN" style="left:323.6px;width:16.9px"><i>AN</i></b><b class="H" style="left:340.5px;width:15.9px"><i>H</i></b><b class="H" style="left:356.4px;width:16.4px"><i>H</i></b><b class="H" style="left:372.8px;width:16.5px"><i>H</i></b><b class="H" style="left:389.2px;width:16.9px"><i>H</i></b><b class="H" style="left:406.1px;width:15.6px"><i>H</i></b><b class="H" style="left:421.8px;width:16.9px"><i>H</i></b><b class="H" style="left:438.6px;width:16.9px"><i>H</i></b><b class="M" style="left:455.5px;width:16.1px"><i>M</i></b><b class="M" style="left:471.6px;width:16.9px"><i>M</i></b><b class="M" style="left:488.5px;width:16.2px"><i>M</i></b><b class="M" style="left:504.7px;width:16.1px"><i>M</i></b></div><div class="rw" style="left:97.0px;top:217.4px;width:520.8px;height:13.5px;line-height:14.5px;"><b class="H" style="left:0.0px;width:16.8px"><i>H</i></b><b class="H" style="left:16.8px;width:17.5px"><i>H</i></b><b class="H" style="left:34.2px;width:17.2px"><i>H</i></b><b class="H" style="left:51.5px;width:17.1px"><i>H</i></b><b class="H" style="left:68.6px;width:16.7px"><i>H</i></b><b class="H" style="left:85.2px;width:17.2px"><i>H</i></b><b class="A" style="left:102.4px;width:17.2px"><i>A</i></b><b class="A" style="left:119.6px;width:16.8px"><i>A</i></b><b class="A" style="left:136.4px;width:16.6px"><i>A</i></b><b class="A" style="left:153.0px;width:16.9px"><i>A</i></b><b class="A" style="left:169.9px;width:17.2px"><i>A</i></b><b class="H" style="left:187.1px;width:17.4px"><i>H</i></b><b class="H" style="left:204.5px;width:16.9px"><i>H</i></b><b class="N" style="left:221.4px;width:17.0px"><i>N</i></b><b class="N" style="left:238.4px;width:16.8px"><i>N</i></b><b class="N" style="left:255.2px;width:17.2px"><i>N</i></b><b class="N" style="left:272.4px;width:17.5px"><i>N</i></b><b class="N" style="left:289.9px;width:16.9px"><i>N</i></b><b class="AN" style="left:306.8px;width:16.9px"><i>AN</i></b><b class="AN" style="left:323.6px;width:16.9px"><i>AN</i></b><b class="H" style="left:340.5px;width:15.9px"><i>H</i></b><b class="H" style="left:356.4px;width:16.4px"><i>H</i></b><b class="H" style="left:372.8px;width:16.5px"><i>H</i></b><b class="H" style="left:389.2px;width:16.9px"><i>H</i></b><b class="H" style="left:406.1px;width:15.6px"><i>H</i></b><b class="H" style="left:421.8px;width:16.9px"><i>H</i></b><b class="H" style="left:438.6px;width:16.9px"><i>H</i></b><b class="M" style="left:455.5px;width:16.1px"><i>M</i></b><b class="M" style="left:471.6px;width:16.9px"><i>M</i></b><b class="M" style="left:488.5px;width:16.2px"><i>M</i></b><b class="M" style="left:504.7px;width:16.1px"><i>M</i></b></div><div class="rw" style="left:97.0px;top:230.8px;width:520.8px;height:13.5px;line-height:14.5px;"><b class="H" style="left:0.0px;width:16.8px"><i>H</i></b><b class="H" style="left:16.8px;width:17.5px"><i>H</i></b><b class="MA" style="left:34.2px;width:17.2px"><i>MA</i></b><b class="H" style="left:51.5px;width:17.1px"><i>H</i></b><b class="H" style="left:68.6px;width:16.7px"><i>H</i></b><b class="H" style="left:85.2px;width:17.2px"><i>H</i></b><b class="A" style="left:102.4px;width:17.2px"><i>A</i></b><b class="A" style="left:119.6px;width:16.8px"><i>A</i></b><b class="A" style="left:136.4px;width:16.6px"><i>A</i></b><b class="A" style="left:153.0px;width:16.9px"><i>A</i></b><b class="A" style="left:169.9px;width:17.2px"><i>A</i></b><b class="H" style="left:187.1px;width:17.4px"><i>H</i></b><b class="H" style="left:204.5px;width:16.9px"><i>H</i></b><b class="N" style="left:221.4px;width:17.0px"><i>N</i></b><b class="N" style="left:238.4px;width:16.8px"><i>N</i></b><b class="N" style="left:255.2px;width:17.2px"><i>N</i></b><b class="N" style="left:272.4px;width:17.5px"><i>N</i></b><b class="N" style="left:289.9px;width:16.9px"><i>N</i></b><b class="AN" style="left:306.8px;width:16.9px"><i>AN</i></b><b class="AN" style="left:323.6px;width:16.9px"><i>AN</i></b><b class="H" style="left:340.5px;width:15.9px"><i>H</i></b><b class="H" style="left:356.4px;width:16.4px"><i>H</i></b><b class="H" style="left:372.8px;width:16.5px"><i>H</i></b><b class="H" style="left:389.2px;width:16.9px"><i>H</i></b><b class="H" style="left:406.1px;width:15.6px"><i>H</i></b><b class="H" style="left:421.8px;width:16.9px"><i>H</i></b><b class="H" style="left:438.6px;width:16.9px"><i>H</i></b><b class="M" style="left:455.5px;width:16.1px"><i>M</i></b><b class="M" style="left:471.6px;width:16.9px"><i>M</i></b><b class="M" style="left:488.5px;width:16.2px"><i>M</i></b><b class="M" style="left:504.7px;width:16.1px"><i>M</i></b></div><div class="rw" style="left:97.0px;top:244.3px;width:520.8px;height:13.5px;line-height:14.5px;"><b class="M" style="left:0.0px;width:16.8px"><i>M</i></b><b class="M" style="left:16.8px;width:17.5px"><i>M</i></b><b class="M" style="left:34.2px;width:17.2px"><i>M</i></b><b class="M" style="left:51.5px;width:17.1px"><i>M</i></b><b class="MA" style="left:68.6px;width:16.7px"><i>MA</i></b><b class="MA" style="left:85.2px;width:17.2px"><i>MA</i></b><b class="H" style="left:102.4px;width:17.2px"><i>H</i></b><b class="H" style="left:119.6px;width:16.8px"><i>H</i></b><b class="H" style="left:136.4px;width:16.6px"><i>H</i></b><b class="H" style="left:153.0px;width:16.9px"><i>H</i></b><b class="H" style="left:169.9px;width:17.2px"><i>H</i></b><b class="H" style="left:187.1px;width:17.4px"><i>H</i></b><b class="H" style="left:204.5px;width:16.9px"><i>H</i></b><b class="A" style="left:221.4px;width:17.0px"><i>A</i></b><b class="A" style="left:238.4px;width:16.8px"><i>A</i></b><b class="A" style="left:255.2px;width:17.2px"><i>A</i></b><b class="A" style="left:272.4px;width:17.5px"><i>A</i></b><b class="A" style="left:289.9px;width:16.9px"><i>A</i></b><b class="H" style="left:306.8px;width:16.9px"><i>H</i></b><b class="H" style="left:323.6px;width:16.9px"><i>H</i></b><b class="N" style="left:340.5px;width:15.9px"><i>N</i></b><b class="N" style="left:356.4px;width:16.4px"><i>N</i></b><b class="N" style="left:372.8px;width:16.5px"><i>N</i></b><b class="N" style="left:389.2px;width:16.9px"><i>N</i></b><b class="N" style="left:406.1px;width:15.6px"><i>N</i></b><b class="AN" style="left:421.8px;width:16.9px"><i>AN</i></b><b class="AN" style="left:438.6px;width:16.9px"><i>AN</i></b><b class="H" style="left:455.5px;width:16.1px"><i>H</i></b><b class="H" style="left:471.6px;width:16.9px"><i>H</i></b><b class="H" style="left:488.5px;width:16.2px"><i>H</i></b><b class="H" style="left:504.7px;width:16.1px"><i>H</i></b></div><div class="rw" style="left:97.0px;top:257.8px;width:520.8px;height:13.5px;line-height:14.5px;"><b class="M" style="left:0.0px;width:16.8px"><i>M</i></b><b class="M" style="left:16.8px;width:17.5px"><i>M</i></b><b class="M" style="left:34.2px;width:17.2px"><i>M</i></b><b class="M" style="left:51.5px;width:17.1px"><i>M</i></b><b class="MA" style="left:68.6px;width:16.7px"><i>MA</i></b><b class="MA" style="left:85.2px;width:17.2px"><i>MA</i></b><b class="H" style="left:102.4px;width:17.2px"><i>H</i></b><b class="H" style="left:119.6px;width:16.8px"><i>H</i></b><b class="H" style="left:136.4px;width:16.6px"><i>H</i></b><b class="H" style="left:153.0px;width:16.9px"><i>H</i></b><b class="H" style="left:169.9px;width:17.2px"><i>H</i></b><b class="H" style="left:187.1px;width:17.4px"><i>H</i></b><b class="H" style="left:204.5px;width:16.9px"><i>H</i></b><b class="A" style="left:221.4px;width:17.0px"><i>A</i></b><b class="A" style="left:238.4px;width:16.8px"><i>A</i></b><b class="A" style="left:255.2px;width:17.2px"><i>A</i></b><b class="A" style="left:272.4px;width:17.5px"><i>A</i></b><b class="A" style="left:289.9px;width:16.9px"><i>A</i></b><b class="H" style="left:306.8px;width:16.9px"><i>H</i></b><b class="H" style="left:323.6px;width:16.9px"><i>H</i></b><b class="N" style="left:340.5px;width:15.9px"><i>N</i></b><b class="N" style="left:356.4px;width:16.4px"><i>N</i></b><b class="N" style="left:372.8px;width:16.5px"><i>N</i></b><b class="N" style="left:389.2px;width:16.9px"><i>N</i></b><b class="N" style="left:406.1px;width:15.6px"><i>N</i></b><b class="AN" style="left:421.8px;width:16.9px"><i>AN</i></b><b class="AN" style="left:438.6px;width:16.9px"><i>AN</i></b><b class="H" style="left:455.5px;width:16.1px"><i>H</i></b><b class="H" style="left:471.6px;width:16.9px"><i>H</i></b><b class="H" style="left:488.5px;width:16.2px"><i>H</i></b><b class="H" style="left:504.7px;width:16.1px"><i>H</i></b></div><div class="rw" style="left:97.0px;top:271.3px;width:520.8px;height:13.5px;line-height:14.5px;"><b class="M" style="left:0.0px;width:16.8px"><i>M</i></b><b class="M" style="left:16.8px;width:17.5px"><i>M</i></b><b class="M" style="left:34.2px;width:17.2px"><i>M</i></b><b class="M" style="left:51.5px;width:17.1px"><i>M</i></b><b class="MA" style="left:68.6px;width:16.7px"><i>MA</i></b><b class="MA" style="left:85.2px;width:17.2px"><i>MA</i></b><b class="H" style="left:102.4px;width:17.2px"><i>H</i></b><b class="H" style="left:119.6px;width:16.8px"><i>H</i></b><b class="H" style="left:136.4px;width:16.6px"><i>H</i></b><b class="H" style="left:153.0px;width:16.9px"><i>H</i></b><b class="H" style="left:169.9px;width:17.2px"><i>H</i></b><b class="H" style="left:187.1px;width:17.4px"><i>H</i></b><b class="H" style="left:204.5px;width:16.9px"><i>H</i></b><b class="A" style="left:221.4px;width:17.0px"><i>A</i></b><b class="A" style="left:238.4px;width:16.8px"><i>A</i></b><b class="A" style="left:255.2px;width:17.2px"><i>A</i></b><b class="A" style="left:272.4px;width:17.5px"><i>A</i></b><b class="A" style="left:289.9px;width:16.9px"><i>A</i></b><b class="H" style="left:306.8px;width:16.9px"><i>H</i></b><b class="H" style="left:323.6px;width:16.9px"><i>H</i></b><b class="N" style="left:340.5px;width:15.9px"><i>N</i></b><b class="N" style="left:356.4px;width:16.4px"><i>N</i></b><b class="N" style="left:372.8px;width:16.5px"><i>N</i></b><b class="N" style="left:389.2px;width:16.9px"><i>N</i></b><b class="N" style="left:406.1px;width:15.6px"><i>N</i></b><b class="AN" style="left:421.8px;width:16.9px"><i>AN</i></b><b class="AN" style="left:438.6px;width:16.9px"><i>AN</i></b><b class="H" style="left:455.5px;width:16.1px"><i>H</i></b><b class="H" style="left:471.6px;width:16.9px"><i>H</i></b><b class="H" style="left:488.5px;width:16.2px"><i>H</i></b><b class="H" style="left:504.7px;width:16.1px"><i>H</i></b></div><div class="rw" style="left:97.0px;top:284.8px;width:520.8px;height:13.5px;line-height:14.5px;"><b class="H" style="left:0.0px;width:16.8px"><i>H</i></b><b class="H" style="left:16.8px;width:17.5px"><i>H</i></b><b class="H" style="left:34.2px;width:17.2px"><i>H</i></b><b class="H" style="left:51.5px;width:17.1px"><i>H</i></b><b class="H" style="left:68.6px;width:16.7px"><i>H</i></b><b class="H" style="left:85.2px;width:17.2px"><i>H</i></b><b class="M" style="left:102.4px;width:17.2px"><i>M</i></b><b class="M" style="left:119.6px;width:16.8px"><i>M</i></b><b class="M" style="left:136.4px;width:16.6px"><i>M</i></b><b class="M" style="left:153.0px;width:16.9px"><i>M</i></b><b class="M" style="left:169.9px;width:17.2px"><i>M</i></b><b class="MA" style="left:187.1px;width:17.4px"><i>MA</i></b><b class="MA" style="left:204.5px;width:16.9px"><i>MA</i></b><b class="H" style="left:221.4px;width:17.0px"><i>H</i></b><b class="H" style="left:238.4px;width:16.8px"><i>H</i></b><b class="H" style="left:255.2px;width:17.2px"><i>H</i></b><b class="H" style="left:272.4px;width:17.5px"><i>H</i></b><b class="H" style="left:289.9px;width:16.9px"><i>H</i></b><b class="H" style="left:306.8px;width:16.9px"><i>H</i></b><b class="H" style="left:323.6px;width:16.9px"><i>H</i></b><b class="A" style="left:340.5px;width:15.9px"><i>A</i></b><b class="A" style="left:356.4px;width:16.4px"><i>A</i></b><b class="A" style="left:372.8px;width:16.5px"><i>A</i></b><b class="A" style="left:389.2px;width:16.9px"><i>A</i></b><b class="A" style="left:406.1px;width:15.6px"><i>A</i></b><b class="H" style="left:421.8px;width:16.9px"><i>H</i></b><b class="H" style="left:438.6px;width:16.9px"><i>H</i></b><b class="N" style="left:455.5px;width:16.1px"><i>N</i></b><b class="N" style="left:471.6px;width:16.9px"><i>N</i></b><b class="N" style="left:488.5px;width:16.2px"><i>N</i></b><b class="N" style="left:504.7px;width:16.1px"><i>N</i></b></div><div class="rw" style="left:97.0px;top:298.3px;width:520.8px;height:13.5px;line-height:14.5px;"><b class="H" style="left:0.0px;width:16.8px"><i>H</i></b><b class="H" style="left:16.8px;width:17.5px"><i>H</i></b><b class="H" style="left:34.2px;width:17.2px"><i>H</i></b><b class="H" style="left:51.5px;width:17.1px"><i>H</i></b><b class="H" style="left:68.6px;width:16.7px"><i>H</i></b><b class="H" style="left:85.2px;width:17.2px"><i>H</i></b><b class="M" style="left:102.4px;width:17.2px"><i>M</i></b><b class="M" style="left:119.6px;width:16.8px"><i>M</i></b><b class="M" style="left:136.4px;width:16.6px"><i>M</i></b><b class="M" style="left:153.0px;width:16.9px"><i>M</i></b><b class="M" style="left:169.9px;width:17.2px"><i>M</i></b><b class="MA" style="left:187.1px;width:17.4px"><i>MA</i></b><b class="MA" style="left:204.5px;width:16.9px"><i>MA</i></b><b class="H" style="left:221.4px;width:17.0px"><i>H</i></b><b class="H" style="left:238.4px;width:16.8px"><i>H</i></b><b class="H" style="left:255.2px;width:17.2px"><i>H</i></b><b class="H" style="left:272.4px;width:17.5px"><i>H</i></b><b class="H" style="left:289.9px;width:16.9px"><i>H</i></b><b class="H" style="left:306.8px;width:16.9px"><i>H</i></b><b class="H" style="left:323.6px;width:16.9px"><i>H</i></b><b class="A" style="left:340.5px;width:15.9px"><i>A</i></b><b class="A" style="left:356.4px;width:16.4px"><i>A</i></b><b class="A" style="left:372.8px;width:16.5px"><i>A</i></b><b class="A" style="left:389.2px;width:16.9px"><i>A</i></b><b class="A" style="left:406.1px;width:15.6px"><i>A</i></b><b class="H" style="left:421.8px;width:16.9px"><i>H</i></b><b class="H" style="left:438.6px;width:16.9px"><i>H</i></b><b class="N" style="left:455.5px;width:16.1px"><i>N</i></b><b class="N" style="left:471.6px;width:16.9px"><i>N</i></b><b class="N" style="left:488.5px;width:16.2px"><i>N</i></b><b class="N" style="left:504.7px;width:16.1px"><i>N</i></b></div><div class="rw" style="left:97.0px;top:311.7px;width:520.8px;height:13.5px;line-height:14.5px;"><b class="H" style="left:0.0px;width:16.8px"><i>H</i></b><b class="H" style="left:16.8px;width:17.5px"><i>H</i></b><b class="H" style="left:34.2px;width:17.2px"><i>H</i></b><b class="H" style="left:51.5px;width:17.1px"><i>H</i></b><b class="H" style="left:68.6px;width:16.7px"><i>H</i></b><b class="H" style="left:85.2px;width:17.2px"><i>H</i></b><b class="M" style="left:102.4px;width:17.2px"><i>M</i></b><b class="M" style="left:119.6px;width:16.8px"><i>M</i></b><b class="M" style="left:136.4px;width:16.6px"><i>M</i></b><b class="M" style="left:153.0px;width:16.9px"><i>M</i></b><b class="M" style="left:169.9px;width:17.2px"><i>M</i></b><b class="MA" style="left:187.1px;width:17.4px"><i>MA</i></b><b class="MA" style="left:204.5px;width:16.9px"><i>MA</i></b><b class="H" style="left:221.4px;width:17.0px"><i>H</i></b><b class="H" style="left:238.4px;width:16.8px"><i>H</i></b><b class="H" style="left:255.2px;width:17.2px"><i>H</i></b><b class="H" style="left:272.4px;width:17.5px"><i>H</i></b><b class="H" style="left:289.9px;width:16.9px"><i>H</i></b><b class="H" style="left:306.8px;width:16.9px"><i>H</i></b><b class="H" style="left:323.6px;width:16.9px"><i>H</i></b><b class="A" style="left:340.5px;width:15.9px"><i>A</i></b><b class="A" style="left:356.4px;width:16.4px"><i>A</i></b><b class="A" style="left:372.8px;width:16.5px"><i>A</i></b><b class="A" style="left:389.2px;width:16.9px"><i>A</i></b><b class="A" style="left:406.1px;width:15.6px"><i>A</i></b><b class="H" style="left:421.8px;width:16.9px"><i>H</i></b><b class="H" style="left:438.6px;width:16.9px"><i>H</i></b><b class="N" style="left:455.5px;width:16.1px"><i>N</i></b><b class="N" style="left:471.6px;width:16.9px"><i>N</i></b><b class="N" style="left:488.5px;width:16.2px"><i>N</i></b><b class="N" style="left:504.7px;width:16.1px"><i>N</i></b></div><div class="rw" style="left:97.0px;top:325.2px;width:520.8px;height:13.5px;line-height:14.5px;"><b class="H" style="left:0.0px;width:16.8px"><i>H</i></b><b class="H" style="left:16.8px;width:17.5px"><i>H</i></b><b class="H" style="left:34.2px;width:17.2px"><i>H</i></b><b class="H" style="left:51.5px;width:17.1px"><i>H</i></b><b class="H" style="left:68.6px;width:16.7px"><i>H</i></b><b class="H" style="left:85.2px;width:17.2px"><i>H</i></b><b class="H" style="left:102.4px;width:17.2px"><i>H</i></b><b class="H" style="left:119.6px;width:16.8px"><i>H</i></b><b class="H" style="left:136.4px;width:16.6px"><i>H</i></b><b class="H" style="left:153.0px;width:16.9px"><i>H</i></b><b class="H" style="left:169.9px;width:17.2px"><i>H</i></b><b class="H" style="left:187.1px;width:17.4px"><i>H</i></b><b class="H" style="left:204.5px;width:16.9px"><i>H</i></b><b class="H" style="left:221.4px;width:17.0px"><i>H</i></b><b class="H" style="left:238.4px;width:16.8px"><i>H</i></b><b class="H" style="left:255.2px;width:17.2px"><i>H</i></b><b class="H" style="left:272.4px;width:17.5px"><i>H</i></b><b class="H" style="left:289.9px;width:16.9px"><i>H</i></b><b class="H" style="left:306.8px;width:16.9px"><i>H</i></b><b class="H" style="left:323.6px;width:16.9px"><i>H</i></b><b class="H" style="left:340.5px;width:15.9px"><i>H</i></b><b class="H" style="left:356.4px;width:16.4px"><i>H</i></b><b class="H" style="left:372.8px;width:16.5px"><i>H</i></b><b class="H" style="left:389.2px;width:16.9px"><i>H</i></b><b class="H" style="left:406.1px;width:15.6px"><i>H</i></b><b class="H" style="left:421.8px;width:16.9px"><i>H</i></b><b class="H" style="left:438.6px;width:16.9px"><i>H</i></b><b class="H" style="left:455.5px;width:16.1px"><i>H</i></b><b class="H" style="left:471.6px;width:16.9px"><i>H</i></b><b class="H" style="left:488.5px;width:16.2px"><i>H</i></b><b class="H" style="left:504.7px;width:16.1px"><i>H</i></b></div><div class="rw" style="left:97.0px;top:338.7px;width:520.8px;height:13.5px;line-height:14.5px;"><b class="N" style="left:0.0px;width:16.8px"><i>N</i></b><b class="N" style="left:16.8px;width:17.5px"><i>N</i></b><b class="N" style="left:34.2px;width:17.2px"><i>N</i></b><b class="N" style="left:51.5px;width:17.1px"><i>N</i></b><b class="AN" style="left:68.6px;width:16.7px"><i>AN</i></b><b class="AN" style="left:85.2px;width:17.2px"><i>AN</i></b><b class="H" style="left:102.4px;width:17.2px"><i>H</i></b><b class="H" style="left:119.6px;width:16.8px"><i>H</i></b><b class="H" style="left:136.4px;width:16.6px"><i>H</i></b><b class="H" style="left:153.0px;width:16.9px"><i>H</i></b><b class="H" style="left:169.9px;width:17.2px"><i>H</i></b><b class="H" style="left:187.1px;width:17.4px"><i>H</i></b><b class="H" style="left:204.5px;width:16.9px"><i>H</i></b><b class="M" style="left:221.4px;width:17.0px"><i>M</i></b><b class="M" style="left:238.4px;width:16.8px"><i>M</i></b><b class="M" style="left:255.2px;width:17.2px"><i>M</i></b><b class="M" style="left:272.4px;width:17.5px"><i>M</i></b><b class="M" style="left:289.9px;width:16.9px"><i>M</i></b><b class="MA" style="left:306.8px;width:16.9px"><i>MA</i></b><b class="MA" style="left:323.6px;width:16.9px"><i>MA</i></b><b class="H" style="left:340.5px;width:15.9px"><i>H</i></b><b class="H" style="left:356.4px;width:16.4px"><i>H</i></b><b class="H" style="left:372.8px;width:16.5px"><i>H</i></b><b class="H" style="left:389.2px;width:16.9px"><i>H</i></b><b class="H" style="left:406.1px;width:15.6px"><i>H</i></b><b class="H" style="left:421.8px;width:16.9px"><i>H</i></b><b class="H" style="left:438.6px;width:16.9px"><i>H</i></b><b class="A" style="left:455.5px;width:16.1px"><i>A</i></b><b class="A" style="left:471.6px;width:16.9px"><i>A</i></b><b class="A" style="left:488.5px;width:16.2px"><i>A</i></b><b class="A" style="left:504.7px;width:16.1px"><i>A</i></b></div><div class="rw" style="left:97.0px;top:352.2px;width:520.8px;height:13.5px;line-height:14.5px;"><b class="N" style="left:0.0px;width:16.8px"><i>N</i></b><b class="N" style="left:16.8px;width:17.5px"><i>N</i></b><b class="N" style="left:34.2px;width:17.2px"><i>N</i></b><b class="N" style="left:51.5px;width:17.1px"><i>N</i></b><b class="AN" style="left:68.6px;width:16.7px"><i>AN</i></b><b class="AN" style="left:85.2px;width:17.2px"><i>AN</i></b><b class="H" style="left:102.4px;width:17.2px"><i>H</i></b><b class="H" style="left:119.6px;width:16.8px"><i>H</i></b><b class="H" style="left:136.4px;width:16.6px"><i>H</i></b><b class="H" style="left:153.0px;width:16.9px"><i>H</i></b><b class="H" style="left:169.9px;width:17.2px"><i>H</i></b><b class="H" style="left:187.1px;width:17.4px"><i>H</i></b><b class="H" style="left:204.5px;width:16.9px"><i>H</i></b><b class="M" style="left:221.4px;width:17.0px"><i>M</i></b><b class="M" style="left:238.4px;width:16.8px"><i>M</i></b><b class="M" style="left:255.2px;width:17.2px"><i>M</i></b><b class="M" style="left:272.4px;width:17.5px"><i>M</i></b><b class="M" style="left:289.9px;width:16.9px"><i>M</i></b><b class="MA" style="left:306.8px;width:16.9px"><i>MA</i></b><b class="MA" style="left:323.6px;width:16.9px"><i>MA</i></b><b class="H" style="left:340.5px;width:15.9px"><i>H</i></b><b class="H" style="left:356.4px;width:16.4px"><i>H</i></b><b class="H" style="left:372.8px;width:16.5px"><i>H</i></b><b class="H" style="left:389.2px;width:16.9px"><i>H</i></b><b class="H" style="left:406.1px;width:15.6px"><i>H</i></b><b class="H" style="left:421.8px;width:16.9px"><i>H</i></b><b class="H" style="left:438.6px;width:16.9px"><i>H</i></b><b class="A" style="left:455.5px;width:16.1px"><i>A</i></b><b class="A" style="left:471.6px;width:16.9px"><i>A</i></b><b class="A" style="left:488.5px;width:16.2px"><i>A</i></b><b class="A" style="left:504.7px;width:16.1px"><i>A</i></b></div><div class="rw" style="left:97.0px;top:365.7px;width:520.8px;height:13.5px;line-height:14.5px;"><b class="N" style="left:0.0px;width:16.8px"><i>N</i></b><b class="N" style="left:16.8px;width:17.5px"><i>N</i></b><b class="N" style="left:34.2px;width:17.2px"><i>N</i></b><b class="N" style="left:51.5px;width:17.1px"><i>N</i></b><b class="AN" style="left:68.6px;width:16.7px"><i>AN</i></b><b class="AN" style="left:85.2px;width:17.2px"><i>AN</i></b><b class="H" style="left:102.4px;width:17.2px"><i>H</i></b><b class="H" style="left:119.6px;width:16.8px"><i>H</i></b><b class="H" style="left:136.4px;width:16.6px"><i>H</i></b><b class="H" style="left:153.0px;width:16.9px"><i>H</i></b><b class="H" style="left:169.9px;width:17.2px"><i>H</i></b><b class="H" style="left:187.1px;width:17.4px"><i>H</i></b><b class="H" style="left:204.5px;width:16.9px"><i>H</i></b><b class="M" style="left:221.4px;width:17.0px"><i>M</i></b><b class="M" style="left:238.4px;width:16.8px"><i>M</i></b><b class="M" style="left:255.2px;width:17.2px"><i>M</i></b><b class="M" style="left:272.4px;width:17.5px"><i>M</i></b><b class="M" style="left:289.9px;width:16.9px"><i>M</i></b><b class="MA" style="left:306.8px;width:16.9px"><i>MA</i></b><b class="MA" style="left:323.6px;width:16.9px"><i>MA</i></b><b class="H" style="left:340.5px;width:15.9px"><i>H</i></b><b class="H" style="left:356.4px;width:16.4px"><i>H</i></b><b class="H" style="left:372.8px;width:16.5px"><i>H</i></b><b class="H" style="left:389.2px;width:16.9px"><i>H</i></b><b class="H" style="left:406.1px;width:15.6px"><i>H</i></b><b class="H" style="left:421.8px;width:16.9px"><i>H</i></b><b class="H" style="left:438.6px;width:16.9px"><i>H</i></b><b class="A" style="left:455.5px;width:16.1px"><i>A</i></b><b class="A" style="left:471.6px;width:16.9px"><i>A</i></b><b class="A" style="left:488.5px;width:16.2px"><i>A</i></b><b class="A" style="left:504.7px;width:16.1px"><i>A</i></b></div><div class="rw" style="left:97.0px;top:379.2px;width:520.8px;height:13.5px;line-height:14.5px;"><b class="A" style="left:0.0px;width:16.8px"><i>A</i></b><b class="A" style="left:16.8px;width:17.5px"><i>A</i></b><b class="A" style="left:34.2px;width:17.2px"><i>A</i></b><b class="A" style="left:51.5px;width:17.1px"><i>A</i></b><b class="H" style="left:68.6px;width:16.7px"><i>H</i></b><b class="H" style="left:85.2px;width:17.2px"><i>H</i></b><b class="N" style="left:102.4px;width:17.2px"><i>N</i></b><b class="N" style="left:119.6px;width:16.8px"><i>N</i></b><b class="N" style="left:136.4px;width:16.6px"><i>N</i></b><b class="N" style="left:153.0px;width:16.9px"><i>N</i></b><b class="N" style="left:169.9px;width:17.2px"><i>N</i></b><b class="AN" style="left:187.1px;width:17.4px"><i>AN</i></b><b class="AN" style="left:204.5px;width:16.9px"><i>AN</i></b><b class="H" style="left:221.4px;width:17.0px"><i>H</i></b><b class="H" style="left:238.4px;width:16.8px"><i>H</i></b><b class="H" style="left:255.2px;width:17.2px"><i>H</i></b><b class="H" style="left:272.4px;width:17.5px"><i>H</i></b><b class="H" style="left:289.9px;width:16.9px"><i>H</i></b><b class="H" style="left:306.8px;width:16.9px"><i>H</i></b><b class="H" style="left:323.6px;width:16.9px"><i>H</i></b><b class="M" style="left:340.5px;width:15.9px"><i>M</i></b><b class="M" style="left:356.4px;width:16.4px"><i>M</i></b><b class="M" style="left:372.8px;width:16.5px"><i>M</i></b><b class="M" style="left:389.2px;width:16.9px"><i>M</i></b><b class="M" style="left:406.1px;width:15.6px"><i>M</i></b><b class="MA" style="left:421.8px;width:16.9px"><i>MA</i></b><b class="MA" style="left:438.6px;width:16.9px"><i>MA</i></b><b class="H" style="left:455.5px;width:16.1px"><i>H</i></b><b class="H" style="left:471.6px;width:16.9px"><i>H</i></b><b class="H" style="left:488.5px;width:16.2px"><i>H</i></b><b class="H" style="left:504.7px;width:16.1px"><i>H</i></b></div><div class="rw" style="left:97.0px;top:392.6px;width:520.8px;height:13.5px;line-height:14.5px;"><b class="A" style="left:0.0px;width:16.8px"><i>A</i></b><b class="A" style="left:16.8px;width:17.5px"><i>A</i></b><b class="A" style="left:34.2px;width:17.2px"><i>A</i></b><b class="A" style="left:51.5px;width:17.1px"><i>A</i></b><b class="H" style="left:68.6px;width:16.7px"><i>H</i></b><b class="H" style="left:85.2px;width:17.2px"><i>H</i></b><b class="N" style="left:102.4px;width:17.2px"><i>N</i></b><b class="N" style="left:119.6px;width:16.8px"><i>N</i></b><b class="N" style="left:136.4px;width:16.6px"><i>N</i></b><b class="N" style="left:153.0px;width:16.9px"><i>N</i></b><b class="N" style="left:169.9px;width:17.2px"><i>N</i></b><b class="AN" style="left:187.1px;width:17.4px"><i>AN</i></b><b class="AN" style="left:204.5px;width:16.9px"><i>AN</i></b><b class="H" style="left:221.4px;width:17.0px"><i>H</i></b><b class="H" style="left:238.4px;width:16.8px"><i>H</i></b><b class="H" style="left:255.2px;width:17.2px"><i>H</i></b><b class="H" style="left:272.4px;width:17.5px"><i>H</i></b><b class="H" style="left:289.9px;width:16.9px"><i>H</i></b><b class="H" style="left:306.8px;width:16.9px"><i>H</i></b><b class="H" style="left:323.6px;width:16.9px"><i>H</i></b><b class="M" style="left:340.5px;width:15.9px"><i>M</i></b><b class="M" style="left:356.4px;width:16.4px"><i>M</i></b><b class="M" style="left:372.8px;width:16.5px"><i>M</i></b><b class="M" style="left:389.2px;width:16.9px"><i>M</i></b><b class="M" style="left:406.1px;width:15.6px"><i>M</i></b><b class="MA" style="left:421.8px;width:16.9px"><i>MA</i></b><b class="MA" style="left:438.6px;width:16.9px"><i>MA</i></b><b class="H" style="left:455.5px;width:16.1px"><i>H</i></b><b class="H" style="left:471.6px;width:16.9px"><i>H</i></b><b class="H" style="left:488.5px;width:16.2px"><i>H</i></b><b class="H" style="left:504.7px;width:16.1px"><i>H</i></b></div><div class="rw" style="left:97.0px;top:406.1px;width:520.8px;height:13.5px;line-height:14.5px;"><b class="A" style="left:0.0px;width:16.8px"><i>A</i></b><b class="A" style="left:16.8px;width:17.5px"><i>A</i></b><b class="A" style="left:34.2px;width:17.2px"><i>A</i></b><b class="A" style="left:51.5px;width:17.1px"><i>A</i></b><b class="H" style="left:68.6px;width:16.7px"><i>H</i></b><b class="H" style="left:85.2px;width:17.2px"><i>H</i></b><b class="N" style="left:102.4px;width:17.2px"><i>N</i></b><b class="N" style="left:119.6px;width:16.8px"><i>N</i></b><b class="N" style="left:136.4px;width:16.6px"><i>N</i></b><b class="N" style="left:153.0px;width:16.9px"><i>N</i></b><b class="N" style="left:169.9px;width:17.2px"><i>N</i></b><b class="AN" style="left:187.1px;width:17.4px"><i>AN</i></b><b class="AN" style="left:204.5px;width:16.9px"><i>AN</i></b><b class="H" style="left:221.4px;width:17.0px"><i>H</i></b><b class="H" style="left:238.4px;width:16.8px"><i>H</i></b><b class="H" style="left:255.2px;width:17.2px"><i>H</i></b><b class="H" style="left:272.4px;width:17.5px"><i>H</i></b><b class="H" style="left:289.9px;width:16.9px"><i>H</i></b><b class="H" style="left:306.8px;width:16.9px"><i>H</i></b><b class="H" style="left:323.6px;width:16.9px"><i>H</i></b><b class="M" style="left:340.5px;width:15.9px"><i>M</i></b><b class="M" style="left:356.4px;width:16.4px"><i>M</i></b><b class="M" style="left:372.8px;width:16.5px"><i>M</i></b><b class="M" style="left:389.2px;width:16.9px"><i>M</i></b><b class="M" style="left:406.1px;width:15.6px"><i>M</i></b><b class="MA" style="left:421.8px;width:16.9px"><i>MA</i></b><b class="MA" style="left:438.6px;width:16.9px"><i>MA</i></b><b class="H" style="left:455.5px;width:16.1px"><i>H</i></b><b class="H" style="left:471.6px;width:16.9px"><i>H</i></b><b class="H" style="left:488.5px;width:16.2px"><i>H</i></b><b class="H" style="left:504.7px;width:16.1px"><i>H</i></b></div><div style="left:12.0px;top:165.2px;width:605.8px;height:1.5px;background:#c6c69a"></div><div style="left:12.0px;top:177.6px;width:605.8px;height:1.5px;background:#c6c69a"></div><div style="left:12.0px;top:189.7px;width:605.8px;height:1.5px;background:#c6c69a"></div><div style="left:12.0px;top:203.1px;width:85.0px;height:1.5px;background:#c6c69a"></div><div style="left:12.0px;top:216.6px;width:85.0px;height:1.5px;background:#c6c69a"></div><div style="left:12.0px;top:230.1px;width:85.0px;height:1.5px;background:#c6c69a"></div><div style="left:12.0px;top:243.6px;width:85.0px;height:1.5px;background:#c6c69a"></div><div style="left:12.0px;top:257.1px;width:85.0px;height:1.5px;background:#c6c69a"></div><div style="left:12.0px;top:270.5px;width:85.0px;height:1.5px;background:#c6c69a"></div><div style="left:12.0px;top:284.0px;width:85.0px;height:1.5px;background:#c6c69a"></div><div style="left:12.0px;top:297.5px;width:85.0px;height:1.5px;background:#c6c69a"></div><div style="left:12.0px;top:311.0px;width:85.0px;height:1.5px;background:#c6c69a"></div><div style="left:12.0px;top:324.5px;width:85.0px;height:1.5px;background:#c6c69a"></div><div style="left:12.0px;top:338.0px;width:85.0px;height:1.5px;background:#c6c69a"></div><div style="left:12.0px;top:351.4px;width:85.0px;height:1.5px;background:#c6c69a"></div><div style="left:12.0px;top:364.9px;width:85.0px;height:1.5px;background:#c6c69a"></div><div style="left:12.0px;top:378.4px;width:85.0px;height:1.5px;background:#c6c69a"></div><div style="left:12.0px;top:391.9px;width:85.0px;height:1.5px;background:#c6c69a"></div><div style="left:12.0px;top:405.4px;width:85.0px;height:1.5px;background:#c6c69a"></div><div style="left:12.0px;top:418.9px;width:85.0px;height:1.5px;background:#c6c69a"></div><div style="left:97.0px;top:203.4px;width:520.8px;height:2.0px;background:#c8c8c8"></div><div style="left:97.0px;top:216.9px;width:520.8px;height:2.0px;background:#c8c8c8"></div><div style="left:97.0px;top:230.3px;width:520.8px;height:2.0px;background:#c8c8c8"></div><div style="left:97.0px;top:243.8px;width:520.8px;height:2.0px;background:#c8c8c8"></div><div style="left:97.0px;top:257.3px;width:520.8px;height:2.0px;background:#c8c8c8"></div><div style="left:97.0px;top:270.8px;width:520.8px;height:2.0px;background:#c8c8c8"></div><div style="left:97.0px;top:284.3px;width:520.8px;height:2.0px;background:#c8c8c8"></div><div style="left:97.0px;top:297.8px;width:520.8px;height:2.0px;background:#c8c8c8"></div><div style="left:97.0px;top:311.2px;width:520.8px;height:2.0px;background:#c8c8c8"></div><div style="left:97.0px;top:324.7px;width:520.8px;height:2.0px;background:#c8c8c8"></div><div style="left:97.0px;top:338.2px;width:520.8px;height:2.0px;background:#c8c8c8"></div><div style="left:97.0px;top:351.7px;width:520.8px;height:2.0px;background:#c8c8c8"></div><div style="left:97.0px;top:365.2px;width:520.8px;height:2.0px;background:#c8c8c8"></div><div style="left:97.0px;top:378.7px;width:520.8px;height:2.0px;background:#c8c8c8"></div><div style="left:97.0px;top:392.1px;width:520.8px;height:2.0px;background:#c8c8c8"></div><div style="left:97.0px;top:405.6px;width:520.8px;height:2.0px;background:#c8c8c8"></div><div style="left:97.0px;top:419.1px;width:520.8px;height:2.0px;background:#c8c8c8"></div><div style="left:112.8px;top:190.4px;width:2.0px;height:229.2px;background:#c8c8c8"></div><div style="left:130.3px;top:190.4px;width:2.0px;height:229.2px;background:#c8c8c8"></div><div style="left:147.6px;top:190.4px;width:2.0px;height:229.2px;background:#c8c8c8"></div><div style="left:164.7px;top:190.4px;width:2.0px;height:229.2px;background:#c8c8c8"></div><div style="left:181.3px;top:190.4px;width:2.0px;height:229.2px;background:#c8c8c8"></div><div style="left:198.5px;top:190.4px;width:2.0px;height:229.2px;background:#c8c8c8"></div><div style="left:215.7px;top:190.4px;width:2.0px;height:229.2px;background:#c8c8c8"></div><div style="left:232.5px;top:190.4px;width:2.0px;height:229.2px;background:#c8c8c8"></div><div style="left:249.1px;top:190.4px;width:2.0px;height:229.2px;background:#c8c8c8"></div><div style="left:266.0px;top:190.4px;width:2.0px;height:229.2px;background:#c8c8c8"></div><div style="left:283.2px;top:190.4px;width:2.0px;height:229.2px;background:#c8c8c8"></div><div style="left:300.6px;top:190.4px;width:2.0px;height:229.2px;background:#c8c8c8"></div><div style="left:317.5px;top:190.4px;width:2.0px;height:229.2px;background:#c8c8c8"></div><div style="left:334.5px;top:190.4px;width:2.0px;height:229.2px;background:#c8c8c8"></div><div style="left:351.3px;top:190.4px;width:2.0px;height:229.2px;background:#c8c8c8"></div><div style="left:368.5px;top:190.4px;width:2.0px;height:229.2px;background:#c8c8c8"></div><div style="left:386.0px;top:190.4px;width:2.0px;height:229.2px;background:#c8c8c8"></div><div style="left:402.9px;top:190.4px;width:2.0px;height:229.2px;background:#c8c8c8"></div><div style="left:419.7px;top:190.4px;width:2.0px;height:229.2px;background:#c8c8c8"></div><div style="left:436.6px;top:190.4px;width:2.0px;height:229.2px;background:#c8c8c8"></div><div style="left:452.5px;top:190.4px;width:2.0px;height:229.2px;background:#c8c8c8"></div><div style="left:468.9px;top:190.4px;width:2.0px;height:229.2px;background:#c8c8c8"></div><div style="left:485.4px;top:190.4px;width:2.0px;height:229.2px;background:#c8c8c8"></div><div style="left:502.2px;top:190.4px;width:2.0px;height:229.2px;background:#c8c8c8"></div><div style="left:517.9px;top:190.4px;width:2.0px;height:229.2px;background:#c8c8c8"></div><div style="left:534.7px;top:190.4px;width:2.0px;height:229.2px;background:#c8c8c8"></div><div style="left:551.6px;top:190.4px;width:2.0px;height:229.2px;background:#c8c8c8"></div><div style="left:567.7px;top:190.4px;width:2.0px;height:229.2px;background:#c8c8c8"></div><div style="left:584.6px;top:190.4px;width:2.0px;height:229.2px;background:#c8c8c8"></div><div style="left:600.8px;top:190.4px;width:2.0px;height:229.2px;background:#c8c8c8"></div><div style="left:34.4px;top:153.5px;width:1.0px;height:266.1px;background:#b8b8b8"></div><div style="left:72.0px;top:153.5px;width:1.0px;height:266.1px;background:#b8b8b8"></div><div style="left:96.5px;top:153.5px;width:1.0px;height:266.1px;background:#b8b8b8"></div><div style="left:617.0px;top:153.5px;width:1.0px;height:12.4px;background:#bdbdbd"></div><div style="left:113.0px;top:165.9px;width:1.0px;height:24.5px;background:#bdbdbd"></div><div style="left:114.0px;top:165.9px;width:1.0px;height:24.5px;background:#e2e2e2"></div><div style="left:130.4px;top:165.9px;width:1.0px;height:24.5px;background:#bdbdbd"></div><div style="left:131.4px;top:165.9px;width:1.0px;height:24.5px;background:#e2e2e2"></div><div style="left:147.7px;top:165.9px;width:1.0px;height:24.5px;background:#bdbdbd"></div><div style="left:148.7px;top:165.9px;width:1.0px;height:24.5px;background:#e2e2e2"></div><div style="left:164.8px;top:165.9px;width:1.0px;height:24.5px;background:#bdbdbd"></div><div style="left:165.8px;top:165.9px;width:1.0px;height:24.5px;background:#e2e2e2"></div><div style="left:181.4px;top:165.9px;width:1.0px;height:24.5px;background:#bdbdbd"></div><div style="left:182.4px;top:165.9px;width:1.0px;height:24.5px;background:#e2e2e2"></div><div style="left:198.6px;top:165.9px;width:1.0px;height:24.5px;background:#bdbdbd"></div><div style="left:199.6px;top:165.9px;width:1.0px;height:24.5px;background:#e2e2e2"></div><div style="left:215.8px;top:165.9px;width:1.0px;height:24.5px;background:#bdbdbd"></div><div style="left:216.8px;top:165.9px;width:1.0px;height:24.5px;background:#e2e2e2"></div><div style="left:232.6px;top:165.9px;width:1.0px;height:24.5px;background:#bdbdbd"></div><div style="left:233.6px;top:165.9px;width:1.0px;height:24.5px;background:#e2e2e2"></div><div style="left:249.2px;top:165.9px;width:1.0px;height:24.5px;background:#bdbdbd"></div><div style="left:250.2px;top:165.9px;width:1.0px;height:24.5px;background:#e2e2e2"></div><div style="left:266.1px;top:165.9px;width:1.0px;height:24.5px;background:#bdbdbd"></div><div style="left:267.1px;top:165.9px;width:1.0px;height:24.5px;background:#e2e2e2"></div><div style="left:283.3px;top:165.9px;width:1.0px;height:24.5px;background:#bdbdbd"></div><div style="left:284.3px;top:165.9px;width:1.0px;height:24.5px;background:#e2e2e2"></div><div style="left:300.7px;top:165.9px;width:1.0px;height:24.5px;background:#bdbdbd"></div><div style="left:301.7px;top:165.9px;width:1.0px;height:24.5px;background:#e2e2e2"></div><div style="left:317.6px;top:165.9px;width:1.0px;height:24.5px;background:#bdbdbd"></div><div style="left:318.6px;top:165.9px;width:1.0px;height:24.5px;background:#e2e2e2"></div><div style="left:334.6px;top:165.9px;width:1.0px;height:24.5px;background:#bdbdbd"></div><div style="left:335.6px;top:165.9px;width:1.0px;height:24.5px;background:#e2e2e2"></div><div style="left:351.4px;top:165.9px;width:1.0px;height:24.5px;background:#bdbdbd"></div><div style="left:352.4px;top:165.9px;width:1.0px;height:24.5px;background:#e2e2e2"></div><div style="left:368.6px;top:165.9px;width:1.0px;height:24.5px;background:#bdbdbd"></div><div style="left:369.6px;top:165.9px;width:1.0px;height:24.5px;background:#e2e2e2"></div><div style="left:386.1px;top:165.9px;width:1.0px;height:24.5px;background:#bdbdbd"></div><div style="left:387.1px;top:165.9px;width:1.0px;height:24.5px;background:#e2e2e2"></div><div style="left:402.9px;top:165.9px;width:1.0px;height:24.5px;background:#bdbdbd"></div><div style="left:403.9px;top:165.9px;width:1.0px;height:24.5px;background:#e2e2e2"></div><div style="left:419.8px;top:165.9px;width:1.0px;height:24.5px;background:#bdbdbd"></div><div style="left:420.8px;top:165.9px;width:1.0px;height:24.5px;background:#e2e2e2"></div><div style="left:436.7px;top:165.9px;width:1.0px;height:24.5px;background:#bdbdbd"></div><div style="left:437.7px;top:165.9px;width:1.0px;height:24.5px;background:#e2e2e2"></div><div style="left:452.6px;top:165.9px;width:1.0px;height:24.5px;background:#bdbdbd"></div><div style="left:453.6px;top:165.9px;width:1.0px;height:24.5px;background:#e2e2e2"></div><div style="left:468.9px;top:165.9px;width:1.0px;height:24.5px;background:#bdbdbd"></div><div style="left:469.9px;top:165.9px;width:1.0px;height:24.5px;background:#e2e2e2"></div><div style="left:485.4px;top:165.9px;width:1.0px;height:24.5px;background:#bdbdbd"></div><div style="left:486.4px;top:165.9px;width:1.0px;height:24.5px;background:#e2e2e2"></div><div style="left:502.3px;top:165.9px;width:1.0px;height:24.5px;background:#bdbdbd"></div><div style="left:503.3px;top:165.9px;width:1.0px;height:24.5px;background:#e2e2e2"></div><div style="left:518.0px;top:165.9px;width:1.0px;height:24.5px;background:#bdbdbd"></div><div style="left:519.0px;top:165.9px;width:1.0px;height:24.5px;background:#e2e2e2"></div><div style="left:534.8px;top:165.9px;width:1.0px;height:24.5px;background:#bdbdbd"></div><div style="left:535.8px;top:165.9px;width:1.0px;height:24.5px;background:#e2e2e2"></div><div style="left:551.7px;top:165.9px;width:1.0px;height:24.5px;background:#bdbdbd"></div><div style="left:552.7px;top:165.9px;width:1.0px;height:24.5px;background:#e2e2e2"></div><div style="left:567.8px;top:165.9px;width:1.0px;height:24.5px;background:#bdbdbd"></div><div style="left:568.8px;top:165.9px;width:1.0px;height:24.5px;background:#e2e2e2"></div><div style="left:584.7px;top:165.9px;width:1.0px;height:24.5px;background:#bdbdbd"></div><div style="left:585.7px;top:165.9px;width:1.0px;height:24.5px;background:#e2e2e2"></div><div style="left:600.9px;top:165.9px;width:1.0px;height:24.5px;background:#bdbdbd"></div><div style="left:601.9px;top:165.9px;width:1.0px;height:24.5px;background:#e2e2e2"></div><div style="left:617.0px;top:165.9px;width:1.0px;height:24.5px;background:#bdbdbd"></div><div style="left:618.0px;top:165.9px;width:1.0px;height:24.5px;background:#e2e2e2"></div><div style="left:96.5px;top:190.9px;width:17.3px;height:13.5px;border:1px solid #555;box-sizing:border-box;"></div></body></html>
